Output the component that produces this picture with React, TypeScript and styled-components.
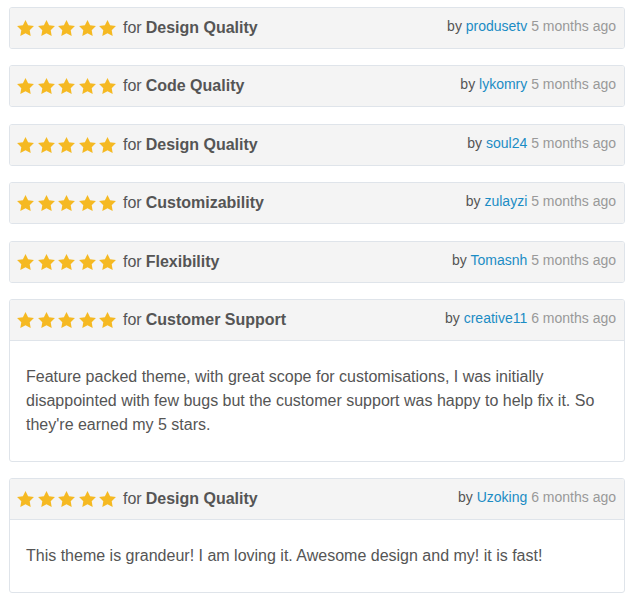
import styled, { createGlobalStyle } from 'styled-components';

const GlobalStyle = createGlobalStyle`
  html, body {
    margin: 0;
    padding: 0;
    background: #fff;
  }
  body {
    font-family: "Liberation Sans", Arial, sans-serif;
  }
`

const List = styled.div`
  display: flex;
  flex-direction: column;
  gap: 16.4px;
  padding: 7px 9px;
`

const Card = styled.div`
  border: 1px solid #dfe4ea;
  border-radius: 3px;
  background: #fff;
  overflow: hidden;
`

const Header = styled.div<{ $divided: boolean }>`
  display: flex;
  align-items: flex-start;
  justify-content: space-between;
  background: #f4f4f4;
  padding: 10px 8px 10px 7px;
  border-bottom: ${p => (p.$divided ? '1px solid #dfe4ea' : 'none')};
`

const Rating = styled.div`
  display: flex;
  align-items: center;
  height: 20px;
  font-size: 16px;
  line-height: 20px;
  color: #555;
`

const Stars = styled.span`
  display: inline-flex;
  align-items: center;
  gap: 3.5px;
  margin-right: 7px;
`

const Category = styled.b`
  font-weight: bold;
  margin-left: 4px;
  color: #555;
`

const Meta = styled.div`
  font-size: 14px;
  line-height: 16px;
  color: #555;
  white-space: nowrap;
`

const Author = styled.a`
  color: #1b8cc4;
  text-decoration: none;
`

const When = styled.span`
  color: #999;
`

const Body = styled.div`
  padding: 24px 16px;
  font-size: 16px;
  line-height: 24px;
  color: #555;
`

const Star = () => (
  <svg width="17" height="16" viewBox="2 2 20 19.02">
    <polygon
      fill="#f5b922"
      points="12,2 15.09,8.26 22,9.27 17,14.14 18.18,21.02 12,17.77 5.82,21.02 7,14.14 2,9.27 8.91,8.26"
    />
  </svg>
)

type Review = {
  category: string
  author: string
  when: string
  text?: string
}

const reviews: Review[] = [
  { category: 'Design Quality', author: 'produsetv', when: '5 months ago' },
  { category: 'Code Quality', author: 'lykomry', when: '5 months ago' },
  { category: 'Design Quality', author: 'soul24', when: '5 months ago' },
  { category: 'Customizability', author: 'zulayzi', when: '5 months ago' },
  { category: 'Flexibility', author: 'Tomasnh', when: '5 months ago' },
  {
    category: 'Customer Support',
    author: 'creative11',
    when: '6 months ago',
    text: "Feature packed theme, with great scope for customisations, I was initially disappointed with few bugs but the customer support was happy to help fix it. So they're earned my 5 stars.",
  },
  {
    category: 'Design Quality',
    author: 'Uzoking',
    when: '6 months ago',
    text: 'This theme is grandeur! I am loving it. Awesome design and my! it is fast!',
  },
]

const App = () => {
  return (
    <>
      <GlobalStyle />
      <List>
        {reviews.map((r, i) => (
          <Card key={i}>
            <Header $divided={!!r.text}>
              <Rating>
                <Stars>
                  {[0, 1, 2, 3, 4].map(s => <Star key={s} />)}
                </Stars>
                for<Category>{r.category}</Category>
              </Rating>
              <Meta>
                by <Author href="#">{r.author}</Author> <When>{r.when}</When>
              </Meta>
            </Header>
            {r.text && <Body>{r.text}</Body>}
          </Card>
        ))}
      </List>
    </>
  )
}

export default App;
